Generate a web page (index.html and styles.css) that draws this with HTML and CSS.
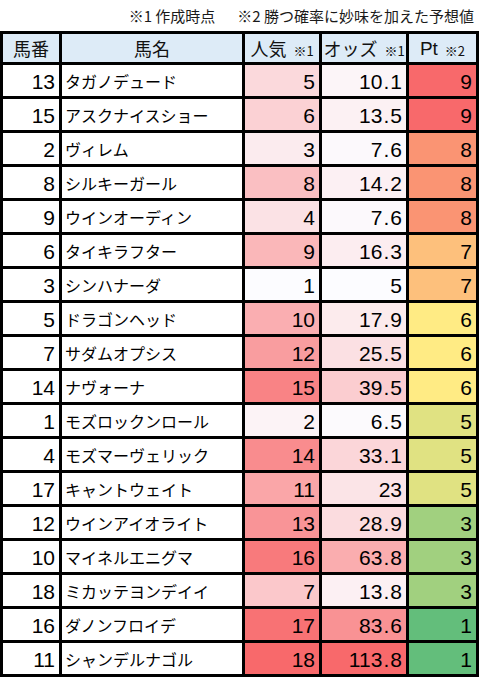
FILE: index.html
```html
<!DOCTYPE html>
<html lang="ja">
<head>
<meta charset="utf-8">
<title>予想表</title>
<link rel="stylesheet" href="styles.css">
</head>
<body>
<div class="note">※1 作成時点<span class="sp"></span>※2 勝つ確率に妙味を加えた予想値</div>
<div class="sheet">
  <div class="h">馬番</div>
  <div class="h">馬名</div>
  <div class="h">人気<small>※1</small></div>
  <div class="h">オッズ<small>※1</small></div>
  <div class="h"><span class="lat">Pt</span><small>※2</small></div>

  <div class="n">13</div><div class="nm">タガノデュード</div><div class="n" style="background:#FBD9DC">5</div><div class="n" style="background:#FCF5F8">10<span class="dot">.</span>1</div><div class="n" style="background:#F8696B">9</div>
  <div class="n">15</div><div class="nm">アスクナイスショー</div><div class="n" style="background:#FBD1D4">6</div><div class="n" style="background:#FCF1F3">13<span class="dot">.</span>5</div><div class="n" style="background:#F8696B">9</div>
  <div class="n">2</div><div class="nm">ヴィレム</div><div class="n" style="background:#FBEBEE">3</div><div class="n" style="background:#FCF9FC">7<span class="dot">.</span>6</div><div class="n" style="background:#FA9473">8</div>
  <div class="n">8</div><div class="nm">シルキーガール</div><div class="n" style="background:#FABFC2">8</div><div class="n" style="background:#FCF0F3">14<span class="dot">.</span>2</div><div class="n" style="background:#FA9473">8</div>
  <div class="n">9</div><div class="nm">ウインオーディン</div><div class="n" style="background:#FBE2E5">4</div><div class="n" style="background:#FCF9FC">7<span class="dot">.</span>6</div><div class="n" style="background:#FA9473">8</div>
  <div class="n">6</div><div class="nm">タイキラフター</div><div class="n" style="background:#FAB7B9">9</div><div class="n" style="background:#FCEDF0">16<span class="dot">.</span>3</div><div class="n" style="background:#FDC07C">7</div>
  <div class="n">3</div><div class="nm">シンハナーダ</div><div class="n" style="background:#FCFCFF">1</div><div class="n" style="background:#FCFCFF">5</div><div class="n" style="background:#FDC07C">7</div>
  <div class="n">5</div><div class="nm">ドラゴンヘッド</div><div class="n" style="background:#FAAEB1">10</div><div class="n" style="background:#FCEBED">17<span class="dot">.</span>9</div><div class="n" style="background:#FFEB84">6</div>
  <div class="n">7</div><div class="nm">サダムオプシス</div><div class="n" style="background:#F99D9F">12</div><div class="n" style="background:#FBE0E3">25<span class="dot">.</span>5</div><div class="n" style="background:#FFEB84">6</div>
  <div class="n">14</div><div class="nm">ナヴォーナ</div><div class="n" style="background:#F98385">15</div><div class="n" style="background:#FBCDD0">39<span class="dot">.</span>5</div><div class="n" style="background:#FFEB84">6</div>
  <div class="n">1</div><div class="nm">モズロックンロール</div><div class="n" style="background:#FCF3F6">2</div><div class="n" style="background:#FCFAFD">6<span class="dot">.</span>5</div><div class="n" style="background:#E0E282">5</div>
  <div class="n">4</div><div class="nm">モズマーヴェリック</div><div class="n" style="background:#F98C8E">14</div><div class="n" style="background:#FBD6D9">33<span class="dot">.</span>1</div><div class="n" style="background:#E0E282">5</div>
  <div class="n">17</div><div class="nm">キャントウェイト</div><div class="n" style="background:#FAA6A8">11</div><div class="n" style="background:#FBE4E7">23</div><div class="n" style="background:#E0E282">5</div>
  <div class="n">12</div><div class="nm">ウインアイオライト</div><div class="n" style="background:#F99497">13</div><div class="n" style="background:#FBDCDF">28<span class="dot">.</span>9</div><div class="n" style="background:#A1D07F">3</div>
  <div class="n">10</div><div class="nm">マイネルエニグマ</div><div class="n" style="background:#F87A7C">16</div><div class="n" style="background:#FAADAF">63<span class="dot">.</span>8</div><div class="n" style="background:#A1D07F">3</div>
  <div class="n">18</div><div class="nm">ミカッテヨンデイイ</div><div class="n" style="background:#FBC8CB">7</div><div class="n" style="background:#FCF0F3">13<span class="dot">.</span>8</div><div class="n" style="background:#A1D07F">3</div>
  <div class="n">16</div><div class="nm">ダノンフロイデ</div><div class="n" style="background:#F87274">17</div><div class="n" style="background:#F99294">83<span class="dot">.</span>6</div><div class="n" style="background:#63BE7B">1</div>
  <div class="n">11</div><div class="nm">シャンデルナゴル</div><div class="n" style="background:#F8696B">18</div><div class="n" style="background:#F8696B">113<span class="dot">.</span>8</div><div class="n" style="background:#63BE7B">1</div>
</div>
</body>
</html>
```
FILE: styles.css
```css
html, body {
  margin: 0;
  padding: 0;
  background: #ffffff;
}
body {
  width: 479px;
  font-family: "Noto Sans CJK JP", sans-serif;
  color: #000;
}
.note {
  height: 31px;
  box-sizing: border-box;
  padding: 5px 5px 0 0;
  text-align: right;
  font-size: 15px;
  line-height: 22px;
  color: #1a1a1a;
  white-space: nowrap;
}
.note .sp {
  display: inline-block;
  width: 22px;
}
.sheet {
  display: grid;
  grid-template-columns: 56px 180px 74px 84px 67px;
  grid-template-rows: 28px;
  grid-auto-rows: 31px;
  gap: 3px;
  padding: 3px;
  background: #000;
  width: 479px;
  box-sizing: border-box;
}
.sheet > div {
  background: #fff;
  display: flex;
  align-items: center;
  overflow: hidden;
  white-space: nowrap;
}
.h {
  background: #DDEBF7 !important;
  justify-content: center;
  font-size: 18px;
  color: #111;
  line-height: 1;
}
.h small {
  font-size: 13px;
  margin-left: 7px;
  margin-top: 4px;
}
.h .lat {
  font-family: "Liberation Sans", sans-serif;
  font-size: 19px;
}
.n {
  justify-content: flex-end;
  padding-right: 4px;
  font-family: "Liberation Sans", sans-serif;
  font-size: 21px;
  line-height: 1;
  padding-top: 2px;
  box-sizing: border-box;
}
.dot {
  display: inline-block;
  width: 8px;
  text-align: center;
}
.nm {
  padding-left: 3px;
  font-size: 16px;
  line-height: 1;
  padding-top: 1px;
  box-sizing: border-box;
}
```
